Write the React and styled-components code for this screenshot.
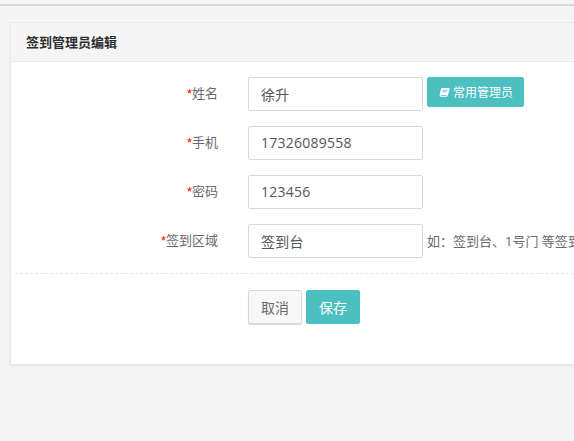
import React from 'react';
import styled, { createGlobalStyle } from 'styled-components';

const GlobalStyle = createGlobalStyle`
  html, body {
    margin: 0;
    height: 100%;
    overflow: hidden;
    background: #f5f5f5;
  }
  body {
    font-family: "Open Sans", "Noto Sans CJK SC", sans-serif;
    font-size: 14px;
    color: #676a6c;
  }
`;

const TopStrip = styled.div`
  height: 4px;
  background: #f6f6f8;
  border-bottom: 2px solid #d9d9d9;
`;

const Page = styled.div`
  padding: 16px 0 0 10px;
`;

const Card = styled.div`
  width: 640px;
  height: 343px;
  background: #fff;
  border: 1px solid #e7eaec;
  box-sizing: border-box;
  box-shadow: 0 1px 2px rgba(0, 0, 0, 0.08);
`;

const CardHeader = styled.div`
  height: 39px;
  box-sizing: border-box;
  padding: 0 0 2px 15px;
  background: #f5f5f5;
  border-bottom: 1px solid #e7eaec;
  display: flex;
  align-items: center;
`;

const CardTitle = styled.h3`
  margin: 0;
  font-size: 13px;
  font-weight: 700;
  color: #2f2f2f;
`;

const Form = styled.div`
  padding: 15px 0 0 4px;
`;

const Row = styled.div`
  display: flex;
  align-items: flex-start;
  gap: 4px;
  height: 34px;
  margin-bottom: 15px;
  white-space: nowrap;
`;

const Label = styled.label`
  width: 203px;
  margin-right: 26px;
  flex: none;
  text-align: right;
  line-height: 32px;
  font-size: 13px;
  color: #676a6c;
`;

const Star = styled.span`
  color: #f00;
  font-family: "Liberation Sans", sans-serif;
`;

const Input = styled.input`
  width: 175px;
  height: 34px;
  flex: none;
  box-sizing: border-box;
  padding: 0 12px 1px;
  border: 1px solid #d9d9d9;
  border-radius: 2px;
  background: #fff;
  font: inherit;
  font-size: 14px;
  letter-spacing: 0.25px;
  color: #555;
  outline: none;
`;

const Hint = styled.span`
  line-height: 34px;
  font-size: 13px;
  color: #676a6c;
`;

const Button = styled.button`
  height: ${({ $small }) => ($small ? '30px' : '34px')};
  padding: ${({ $small }) => ($small ? '0 10px 0 11px' : '0 12px')};
  box-sizing: border-box;
  border-radius: 2px;
  font: inherit;
  font-size: ${({ $small }) => ($small ? '12px' : '14px')};
  cursor: pointer;
  display: inline-flex;
  align-items: center;
  gap: 3px;
  flex: none;
  border: 1px solid ${({ $primary }) => ($primary ? '#4cc0c1' : '#d9d9d9')};
  background: ${({ $primary }) => ($primary ? '#4cc0c1' : '#f8f8f8')};
  color: ${({ $primary }) => ($primary ? '#fff' : '#676a6c')};
  box-shadow: ${({ $primary }) => ($primary ? 'none' : '0 1px 1px rgba(0, 0, 0, 0.15)')};
`;

const Divider = styled.div`
  margin: 0 0 16px;
  border-top: 1px dashed #e7eaec;
`;

const Actions = styled.div`
  display: flex;
  gap: 4px;
  padding-left: 233px;
`;

const BookIcon = () => (
  <svg width="11" height="11" viewBox="0 0 12 12" fill="#fff">
    <path d="M3 1h8.2c.4 0 .6.3.5.7L9.6 9.3c-.2.7-.6 1.2-1.4 1.2H2c-.9 0-1.6-.9-1.3-2L2.3 2c.1-.6.3-1 .7-1zm.9 2-.2.8h5.6l.2-.8H3.9zM3.3 5l-.2.8h5.6l.2-.8H3.3zM2.2 8.6c-.2.6.1.9.6.9h5.3c.2 0 .4-.1.5-.3l.1-.6H2.2z" fillRule="evenodd" />
  </svg>
);

const fields = [
  { label: '姓名', value: '徐升', extra: <Button $primary $small><BookIcon />常用管理员</Button> },
  { label: '手机', value: '17326089558' },
  { label: '密码', value: '123456' },
  { label: '签到区域', value: '签到台', extra: <Hint>如：签到台、1号门 等签到区域</Hint> },
];

const App = () => {
  return (
    <>
      <GlobalStyle />
      <TopStrip />
      <Page>
        <Card>
          <CardHeader>
            <CardTitle>签到管理员编辑</CardTitle>
          </CardHeader>
          <Form>
            {fields.map((field) => (
              <Row key={field.label}>
                <Label><Star>*</Star>{field.label}</Label>
                <Input defaultValue={field.value} />
                {field.extra}
              </Row>
            ))}
            <Divider />
            <Actions>
              <Button>取消</Button>
              <Button $primary>保存</Button>
            </Actions>
          </Form>
        </Card>
      </Page>
    </>
  );
};

export default App;
